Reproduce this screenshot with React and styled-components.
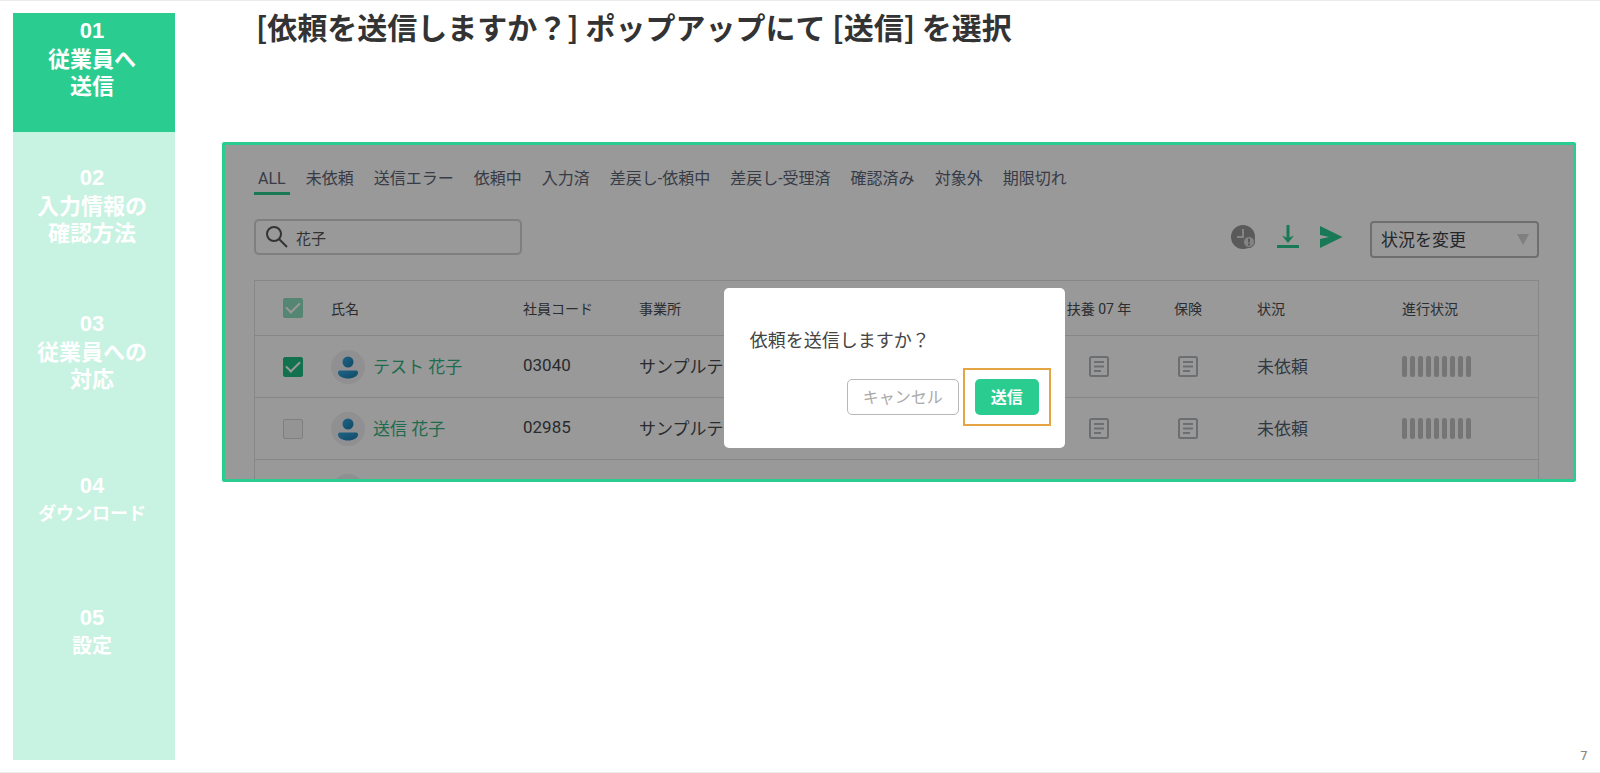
import React, { useState } from 'react'
import styled, { createGlobalStyle } from 'styled-components'

const steps = [
    { number: '01', label: '従業員へ\n送信', height: 119, active: true },
    { number: '02', label: '入力情報の\n確認方法', height: 146 },
    { number: '03', label: '従業員への\n対応', height: 162 },
    { number: '04', label: 'ダウンロード', height: 132, size: 18 },
    { number: '05', label: '設定', height: 132, size: 20 },
]

const tabs = ['ALL', '未依頼', '送信エラー', '依頼中', '入力済', '差戻し-依頼中', '差戻し-受理済', '確認済み', '対象外', '期限切れ']

const employees = [
    { name: 'テスト 花子', code: '03040', office: 'サンプルテ', status: '未依頼', checked: true },
    { name: '送信 花子', code: '02985', office: 'サンプルテ', status: '未依頼', checked: false },
]

const SearchIcon = () => (
    <svg width="24" height="24" viewBox="0 0 24 24" fill="none" stroke="#555" strokeWidth="2" aria-hidden="true">
        <circle cx="9" cy="9" r="7" />
        <path d="M14 14l8 8" />
    </svg>
)

const HistoryIcon = () => (
    <svg width="26" height="26" viewBox="0 0 26 26" aria-hidden="true">
        <circle cx="12" cy="13" r="12" fill="#969696" />
        <path d="M12 5v8H6" fill="none" stroke="#dcdcdc" strokeWidth="2" />
        <circle cx="18" cy="18" r="5.500" fill="#dcdcdc" stroke="#969696" />
        <path d="M18 14.500v4M18 19.500v2" stroke="#969696" strokeWidth="2" />
    </svg>
)

const DownloadIcon = () => (
    <svg width="22" height="24" viewBox="0 0 22 24" aria-hidden="true">
        <path d="M11 0v13" stroke="#2bc98f" strokeWidth="3" />
        <path d="M5 10.500L11 13l6-2.500L11 18z" fill="#2bc98f" />
        <path d="M0 21.500h22" stroke="#2bc98f" strokeWidth="3" />
    </svg>
)

const SendIcon = () => (
    <svg width="24" height="24" viewBox="0 0 24 24" aria-hidden="true">
        <path d="M1 1l22.500 11L1 23v-9l9-2-9-2z" fill="#2bc98f" />
    </svg>
)

const AvatarIcon = () => (
    <svg width="34" height="34" viewBox="0 0 34 34" aria-hidden="true">
        <defs>
            <linearGradient id="person" x1="0" y1="0" x2="1" y2="1">
                <stop offset="0" stopColor="#35a5dc" />
                <stop offset="1" stopColor="#1b7cae" />
            </linearGradient>
        </defs>
        <circle cx="17" cy="17" r="17" fill="#f0f0f3" />
        <circle cx="17" cy="12" r="5.500" fill="url(#person)" />
        <path d="M7 22.500c0-1.500 1-2 2.500-2h15c1.500 0 2.500.5 2.500 2 0 3.500-4.500 6-10 6s-10-2.500-10-6z" fill="url(#person)" />
    </svg>
)

const DocumentIcon = () => (
    <svg width="20" height="21" viewBox="0 0 20 21" fill="none" stroke="#b4b9bf" strokeWidth="2" aria-hidden="true">
        <rect x="1" y="1" width="18" height="19" rx="1.500" />
        <path d="M5 6h10M5 10.500h10M5 15h7" />
    </svg>
)

const Progress = () => (
    <Bars>
        {Array.from({ length: 9 }, (_, i) => <Bar key={i} />)}
    </Bars>
)

const Sidebar = () => (
    <StepList>
        {steps.map(step => (
            <Step key={step.number} $active={step.active} $height={step.height}>
                <StepNumber>{step.number}</StepNumber>
                <StepLabel $size={step.size}>{step.label}</StepLabel>
            </Step>
        ))}
    </StepList>
)

const EmployeeTable = () => {

    const [rows, setRows] = useState(employees)

    const handleToggle = index => {
        setRows(prev => prev.map((row, i) => i === index ? { ...row, checked: !row.checked } : row))
    }

    return (
        <Table>
            <colgroup>
                <Col $width={76} />
                <Col $width={192} />
                <Col $width={116} />
                <Col />
                <Col $width={92} />
                <Col $width={86} />
                <Col $width={171} />
                <Col $width={136} />
            </colgroup>
            <thead>
                <HeadRow>
                    <Th $left={28}><Checkbox aria-label="すべて選択" defaultChecked $faded /></Th>
                    <Th>氏名</Th>
                    <Th>社員コード</Th>
                    <Th>事業所</Th>
                    <Th $center>扶養 07 年</Th>
                    <Th $center>保険</Th>
                    <Th $left={26}>状況</Th>
                    <Th>進行状況</Th>
                </HeadRow>
            </thead>
            <tbody>
                {rows.map((row, index) => (
                    <Row key={row.code}>
                        <Td $left={28}>
                            <Checkbox aria-label={row.name} checked={row.checked} onChange={() => handleToggle(index)} />
                        </Td>
                        <Td>
                            <Person>
                                <AvatarIcon />
                                <NameLink href="#">{row.name}</NameLink>
                            </Person>
                        </Td>
                        <Td><CellText>{row.code}</CellText></Td>
                        <Td><CellText>{row.office}</CellText></Td>
                        <Td $center><DocumentIcon /></Td>
                        <Td $center><DocumentIcon /></Td>
                        <Td $left={26}><CellText $muted>{row.status}</CellText></Td>
                        <Td><Progress /></Td>
                    </Row>
                ))}
                <Row>
                    <Td />
                    <Td><Person><AvatarIcon /></Person></Td>
                    <Td colSpan={6} />
                </Row>
            </tbody>
        </Table>
    )
}

const App = () => {
    return (
        <Page>
            <GlobalStyle />
            <Sidebar />
            <Main>
                <Title>[依頼を送信しますか？] ポップアップにて [送信] を選択</Title>
                <Frame>
                    <Screen>
                        <Tabs>
                            {tabs.map((tab, i) => <Tab key={tab} $active={i === 0}>{tab}</Tab>)}
                        </Tabs>
                        <Toolbar>
                            <SearchBox>
                                <SearchIcon />
                                <SearchInput aria-label="検索" defaultValue="花子" />
                            </SearchBox>
                            <Actions>
                                <IconButton aria-label="履歴"><HistoryIcon /></IconButton>
                                <IconButton aria-label="ダウンロード"><DownloadIcon /></IconButton>
                                <IconButton aria-label="送信"><SendIcon /></IconButton>
                            </Actions>
                            <SelectBox>
                                <Select aria-label="状況を変更">
                                    <option>状況を変更</option>
                                </Select>
                                <Arrow />
                            </SelectBox>
                        </Toolbar>
                        <EmployeeTable />
                    </Screen>
                    <Overlay>
                        <Dialog role="dialog" aria-labelledby="dialog-title">
                            <DialogTitle id="dialog-title">依頼を送信しますか？</DialogTitle>
                            <DialogActions>
                                <CancelButton>キャンセル</CancelButton>
                                <Highlight>
                                    <SubmitButton>送信</SubmitButton>
                                </Highlight>
                            </DialogActions>
                        </Dialog>
                    </Overlay>
                </Frame>
                <PageNumber>7</PageNumber>
            </Main>
        </Page>
    )
}

export default App

const GlobalStyle = createGlobalStyle`
    * {
        box-sizing: border-box;
    }
    body {
        margin: 0;
        background: #fff;
        font-family: Roboto, "Noto Sans CJK JP", sans-serif;
    }
    button, input, select {
        font-family: inherit;
    }
    svg {
        display: block;
        flex-shrink: 0;
    }
`

const Page = styled.div`
    display: flex;
    gap: 47px;
    min-height: 100vh;
    padding: 12px 24px 12px 13px;
    border-top: 1px solid #ebebeb;
    border-bottom: 1px solid #ebebeb;
`

const StepList = styled.ol`
    flex: 0 0 162px;
    margin: 0;
    padding: 0;
    list-style: none;
    background: #c8f2e1;
`

const Step = styled.li`
    height: ${({ $height }) => $height}px;
    padding: ${({ $active }) => $active ? 5 : 33}px 4px 0 0;
    background: ${({ $active }) => $active ? '#2bcc90' : 'none'};
    color: #fff;
    font-size: 22px;
    font-weight: 700;
    line-height: 27px;
    text-align: center;
`

const StepNumber = styled.div`
    font-family: "Liberation Sans", sans-serif;
    line-height: 26px;
`

const StepLabel = styled.div`
    font-family: "Noto Sans CJK JP", sans-serif;
    font-size: ${({ $size }) => $size || 22}px;
    white-space: pre-line;
`

const Main = styled.main`
    flex: 1;
    min-width: 0;
    display: flex;
    flex-direction: column;
`

const Title = styled.h1`
    margin: 0 0 103px;
    padding-left: 34px;
    color: #333;
    font-family: "Noto Sans CJK JP", sans-serif;
    font-size: 30px;
    font-weight: 700;
    line-height: 26px;
`

const Frame = styled.section`
    position: relative;
    height: 340px;
    border: 3px solid #2bcc90;
    border-radius: 2px;
    overflow: hidden;
`

const Screen = styled.div`
    padding: 22px 34px 0 29px;
`

const Tabs = styled.nav`
    display: flex;
    gap: 12px;
`

const Tab = styled.button`
    padding: 0 4px 1px;
    border: none;
    border-bottom: 3px solid ${({ $active }) => $active ? '#2bc98f' : 'transparent'};
    background: none;
    color: #5c6577;
    font-size: 16px;
    line-height: 24px;
    white-space: nowrap;
    cursor: pointer;
`

const Toolbar = styled.div`
    display: flex;
    align-items: center;
    margin: 21px 0 22px;
`

const SearchBox = styled.label`
    display: flex;
    align-items: center;
    gap: 7px;
    width: 268px;
    height: 36px;
    padding: 0 9px;
    border: 2px solid #d2d4d7;
    border-radius: 5px;
`

const SearchInput = styled.input`
    flex: 1;
    min-width: 0;
    padding: 0;
    border: none;
    outline: none;
    background: none;
    color: #555;
    font-size: 15px;
`

const Actions = styled.div`
    display: flex;
    align-items: center;
    gap: 20px;
    margin: 0 27px 0 auto;
`

const IconButton = styled.button`
    padding: 0;
    border: none;
    background: none;
    cursor: pointer;
`

const SelectBox = styled.div`
    position: relative;
    margin-top: 5px;
`

const Select = styled.select`
    appearance: none;
    display: block;
    width: 169px;
    height: 37px;
    padding: 0 9px;
    border: 2px solid #b8babc;
    border-radius: 4px;
    background: none;
    color: #3c3f46;
    font-size: 17px;
`

const Arrow = styled.span`
    position: absolute;
    top: 13px;
    right: 10px;
    border: 6px solid transparent;
    border-top: 11px solid #d4d4d4;
    border-bottom: none;
    pointer-events: none;
`

const Table = styled.table`
    width: 100%;
    table-layout: fixed;
    border-collapse: separate;
    border-spacing: 0;
    border: 1px solid #dfe1e4;
    border-bottom: none;
`

const Col = styled.col`
    width: ${({ $width }) => $width ? `${$width}px` : 'auto'};
`

const HeadRow = styled.tr`
    height: 55px;
`

const Row = styled.tr`
    height: 62px;
`

const Th = styled.th`
    padding: 0 0 0 ${({ $left }) => $left || 0}px;
    border-bottom: 1px solid #dfe1e4;
    color: #484b50;
    font-size: 14px;
    font-weight: 400;
    text-align: ${({ $center }) => $center ? 'center' : 'left'};
    white-space: nowrap;
`

const Td = styled.td`
    padding: 0 0 0 ${({ $left }) => $left || 0}px;
    border-bottom: 1px solid #dfe1e4;
    font-size: 17px;
    white-space: nowrap;
    svg {
        margin: ${({ $center }) => $center ? '0 auto' : 0};
    }
`

const CellText = styled.div`
    padding-bottom: 3px;
    color: ${({ $muted }) => $muted ? '#526170' : '#46494e'};
`

const Checkbox = styled.input.attrs({ type: 'checkbox' })`
    appearance: none;
    display: grid;
    place-items: center;
    width: 20px;
    height: 20px;
    margin: 0;
    border: 1px solid #d4d4d4;
    border-radius: 2px;
    background: #f7f7f7;
    opacity: ${({ $faded }) => $faded ? 0.5 : 1};
    &:checked {
        border-color: #20be83;
        background: #20be83;
    }
    &:checked::before {
        content: '';
        width: 12px;
        height: 6px;
        margin-bottom: 4px;
        border-left: 2px solid #fff;
        border-bottom: 2px solid #fff;
        transform: rotate(-45deg);
    }
`

const Person = styled.div`
    display: flex;
    align-items: center;
    gap: 8px;
`

const NameLink = styled.a`
    padding-bottom: 3px;
    color: #35b283;
    text-decoration: none;
`

const Bars = styled.div`
    display: flex;
    gap: 3px;
`

const Bar = styled.span`
    width: 5px;
    height: 21px;
    border-radius: 2px;
    background: #c4c4c4;
`

const Overlay = styled.div`
    position: absolute;
    inset: 0;
    padding: 143px 0 0 37%;
    background: rgba(0, 0, 0, 0.4);
`

const Dialog = styled.div`
    width: 341px;
    padding: 39px 14px 22px 26px;
    border-radius: 5px;
    background: #fff;
`

const DialogTitle = styled.h2`
    margin: 0 0 13px;
    color: #444;
    font-size: 18px;
    font-weight: 400;
    line-height: 28px;
`

const DialogActions = styled.div`
    display: flex;
    align-items: center;
    justify-content: flex-end;
    gap: 4px;
`

const DialogButton = styled.button`
    height: 36px;
    padding: 0 0 3px;
    border-radius: 5px;
    font-size: 16px;
    cursor: pointer;
`

const CancelButton = styled(DialogButton)`
    width: 112px;
    border: 1px solid #b8b8b8;
    background: #fff;
    color: #aaa;
`

const Highlight = styled.div`
    padding: 9px 10px;
    border: 2px solid #e5a544;
`

const SubmitButton = styled(DialogButton)`
    display: block;
    width: 64px;
    border: none;
    background: #2bcc90;
    color: #fff;
    font-weight: 700;
`

const PageNumber = styled.footer`
    margin: auto -12px -6px 0;
    color: #888;
    font-family: "DejaVu Sans", sans-serif;
    font-size: 13px;
    line-height: 20px;
    text-align: right;
`
